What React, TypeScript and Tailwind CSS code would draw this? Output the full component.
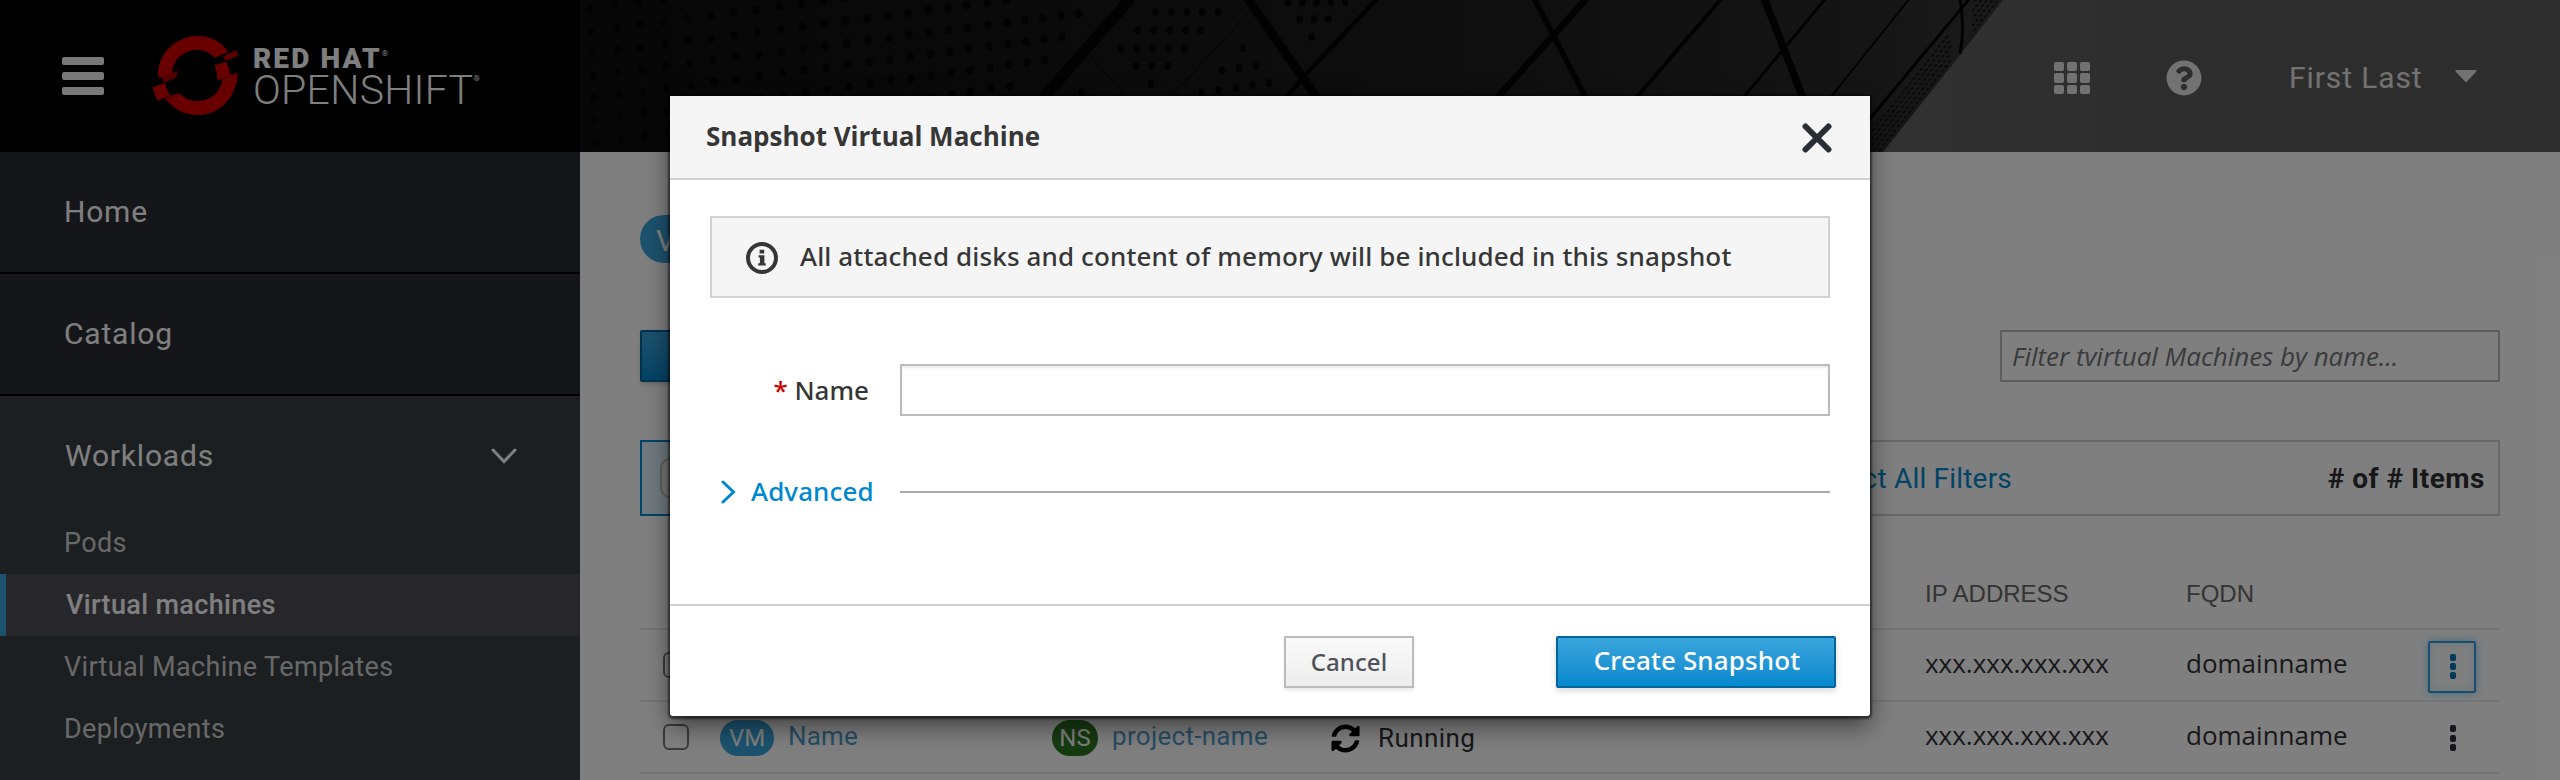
import type { ReactNode } from "react";
import { FaQuestionCircle, FaSyncAlt } from "react-icons/fa";

const overpass = "font-[Roboto,sans-serif]";

function Logo() {
  return (
    <svg width="96" height="104" viewBox="20 0 288 312" className="shrink-0">
      <g fill="#d20000">
        <path d="M53 160 C50 90 105 36 172 36 C210 36 244 52 263 84 L223 101 C208 85 192 77 172 77 C130 77 97 108 95 147 Z" />
        <path d="M222 124 L258 113 Q268 132 270 154 L230 166 Q231 143 222 124 Z" />
        <path d="M292 146 C292 215 240 273 172 273 C130 273 97 252 76 225 L120 210 C135 225 155 231 172 231 C212 231 244 202 247 162 Z" />
        <path d="M37 190 L74 176 Q78 198 90 213 L53 230 Q41 212 37 190 Z" />
      </g>
      <g fill="#b00000">
        <path d="M222 108 L288 78 L294 95 L256 112 L248 97 Z" />
        <path d="M53 160 L112 142 L108 160 L71 177 L66 163 Z" />
        <path d="M230 166 L270 151 L292 146 L288 154 L247 168 Z" />
        <path d="M72 221 L114 207 L122 212 L80 230 Z" />
      </g>
    </svg>
  );
}

const dotColumns = [
  60, 110, 156, 203, 250, 295, 340, 385, 430, 473, 516, 558, 600, 640, 680, 720, 758, 795, 835, 872, 907, 942, 978, 1013,
];
const dotRows = [-1, 0, 1, 2, 3, 4, 5, 6, 7, 8];
const extraDots: [number, number][] = [
  [1167, 37], [1198, 37], [1229, 37], [1259, 37], [1290, 37],
  [1133, 91], [1164, 91], [1195, 91], [1226, 91], [1256, 91],
  [1100, 146], [1131, 146], [1162, 146], [1193, 146], [1224, 146],
  [1129, 199], [1160, 199], [1191, 199], [1158, 252], [1022, 275],
  [1338, 145], [1297, 212], [1331, 205], [1364, 197],
  [1257, 278], [1291, 271], [1325, 264], [1357, 256], [1390, 249],
  [1427, 8], [1455, 8], [1483, 7], [1511, 7], [1539, 7],
  [1450, 58], [1478, 58], [1506, 58], [1473, 110],
];

const panelDots: [number, number][] = [];
for (let r = 0; r < 36; r++) {
  for (let c = 0; c < 5; c++) {
    const y = 2 + r * 4.6 - c * 0.4;
    const edge = y < 53 ? 2003 - y * 0.78 : 1961.7 - (y - 53) * 0.795;
    const x = edge - 5 - c * 5.6;
    const beam = 1968 - y * 0.83;
    if (y < 30 ? x > 1972 : x > beam + 6 && x < 1950 && y > 32) panelDots.push([x, y]);
  }
}

function Skyline() {
  return (
    <svg width="1980" height="152" viewBox="580 0 1980 152" className="block">
      <defs>
        <linearGradient id="wall" x1="0" x2="1">
          <stop offset="0" stopColor="#0e0e0e" />
          <stop offset="0.3" stopColor="#141414" />
          <stop offset="0.65" stopColor="#1e1e1e" />
          <stop offset="0.9" stopColor="#2a2a2a" />
          <stop offset="1" stopColor="#363636" />
        </linearGradient>
        <linearGradient id="sky" x1="0" x2="1">
          <stop offset="0" stopColor="#646464" />
          <stop offset="0.5" stopColor="#5a5a5a" />
          <stop offset="1" stopColor="#5c5c5c" />
        </linearGradient>
      </defs>
      <rect x="1860" y="0" width="700" height="152" fill="url(#sky)" />
      <path d="M580 0 H2003 L1961.7 53 L1883 152 H580 Z" fill="url(#wall)" />
      <g fill="#060606">
        {dotRows.flatMap((k) =>
          dotColumns.map((x) => {
            const y = 93 + 67 * k - 0.196 * (x - 60) - (k > 2 ? (k - 2) * (x / 1012) * 4 : 0);
            if (y < -5 || x + 0.6 * (y - 45) > 1030) return null;
            return <ellipse key={`${k}-${x}`} cx={560 + (x + k * 2) / 1.96} cy={y / 3} rx="3.7" ry="4.3" />;
          })
        )}
        {extraDots.map(([x, y]) => (
          <ellipse key={`${x}-${y}`} cx={560 + x / 1.96} cy={y / 3} rx="3.4" ry="4" />
        ))}
      </g>
      <g stroke="#050505" fill="none">
        <path d="M1131 -2 L1043 98" strokeWidth="11" />
        <path d="M1247 -2 L1317 98" strokeWidth="9" />
        <path d="M1378 -2 L1308 72 L1286 98" strokeWidth="4.5" />
        <path d="M1534 -2 L1586 98" strokeWidth="5.5" />
        <path d="M1587 -2 L1497 98" strokeWidth="6.5" />
        <path d="M1722 -2 L1636 98" strokeWidth="4" />
        <path d="M1764 -2 L1803 98" strokeWidth="7.5" />
        <path d="M1826 -2 L1743 98" strokeWidth="3" />
        <path d="M1910 -2 L1830 98" strokeWidth="2" />
        <path d="M1970 -2 L1868 121" strokeWidth="3" />
        <path d="M1960 -2 Q1965 30 1960 54" strokeWidth="3" />
        <path d="M1249 12 L1172 96 M1085 50 L1124 94" strokeWidth="1" />
      </g>
      <g fill="#161616">
        {panelDots.map(([x, y], i) => (
          <ellipse key={i} cx={x} cy={y} rx="2.1" ry="1.1" transform={`rotate(-35 ${x} ${y})`} />
        ))}
      </g>
    </svg>
  );
}

function Header() {
  return (
    <header className="flex h-[152px] bg-black">
      <div className="flex w-[580px] shrink-0 items-center pl-[62px]">
        <div className="flex w-[42px] flex-col gap-[7px]">
          <div className="h-2 rounded-[2px] bg-[#f2f2f2]" />
          <div className="h-2 rounded-[2px] bg-[#f2f2f2]" />
          <div className="h-2 rounded-[2px] bg-[#f2f2f2]" />
        </div>
        <div className="ml-[43px] flex items-center">
          <Logo />
          <div className={`${overpass} ml-[10px] flex flex-col text-white`}>
            <div className="flex h-[27px] text-[28px] font-black leading-[22px] tracking-[2.1px]">
              RED HAT<span className="text-[8px] font-normal leading-[12px] tracking-normal">®</span>
            </div>
            <div className="flex h-[29px] text-[41px] font-[350] leading-[30px] tracking-[0.3px]">
              OPENSHIFT<span className="text-[8px] font-normal leading-[8px] tracking-normal">®</span>
            </div>
          </div>
        </div>
      </div>
      <div className="grid grow">
        <div className="col-start-1 row-start-1">
          <Skyline />
        </div>
        <div className="z-10 col-start-1 row-start-1 flex h-[152px] items-center pl-[1474px] pt-1 text-[#e4e4e4]">
          <div className="grid grid-cols-3 gap-x-[3px] gap-y-[2px]">
            {Array.from({ length: 9 }, (_, i) => (
              <div key={i} className="h-[9.3px] w-[10px] rounded-[2px] bg-[#e4e4e4]" />
            ))}
          </div>
          <FaQuestionCircle size={36} className="ml-[76px]" />
          <div className={`${overpass} ml-[87px] w-[134px] whitespace-nowrap pb-[2px] text-[30px] tracking-[0.9px]`}>
            First Last
          </div>
          <svg width="22" height="12" viewBox="0 0 22 12" className="mb-1 ml-[32px]">
            <path d="M1.5 1 H20.5 L11 11 Z" fill="#e4e4e4" stroke="#e4e4e4" strokeWidth="2" strokeLinejoin="round" />
          </svg>
        </div>
      </div>
    </header>
  );
}

const workloads = ["Pods", "Virtual machines", "Virtual Machine Templates", "Deployments"];

function Sidebar() {
  return (
    <nav className={`${overpass} w-[580px] shrink-0 bg-[#393f43]`}>
      {["Home", "Catalog"].map((t) => (
        <div
          key={t}
          className="flex h-[122px] items-center border-b-2 border-black bg-[#2a2c33] pb-[2px] pl-[64px] text-[30px] tracking-[0.8px] text-white"
        >
          {t}
        </div>
      ))}
      <div className="flex h-[116px] items-center justify-between pl-[65px] pr-[63px] pt-[2px] text-[30px] tracking-[0.8px] text-white">
        Workloads
        <svg width="26" height="16" viewBox="0 0 26 16" fill="none" stroke="#fff" strokeWidth="3" strokeLinecap="round" className="mt-[2px]">
          <path d="M2 2 L13 13.5 L24 2" />
        </svg>
      </div>
      {workloads.map((t) =>
        t === "Virtual machines" ? (
          <div
            key={t}
            className="flex h-[62px] items-center border-l-[6px] border-[#39a5dc] bg-[#4e4f57] pl-[60px] text-[27px] font-medium tracking-[0.35px] text-white"
          >
            {t}
          </div>
        ) : (
          <div key={t} className="flex h-[62px] items-center pl-[64px] pt-[1px] text-[27px] tracking-[0.35px] text-[#d1d1d1]">
            {t}
          </div>
        )
      )}
    </nav>
  );
}

function Checkbox() {
  return <div className="h-[26px] w-[26px] rounded-[6px] border-2 border-[#77777b]" />;
}

function Badge({ children, className }: { children: ReactNode; className: string }) {
  return (
    <div className={`flex h-9 items-center justify-center rounded-full text-[24px] text-white ${className}`}>{children}</div>
  );
}

function Kebab({ active }: { active?: boolean }) {
  const dot = active ? "h-[7px] w-[6px] rounded-[2px] bg-[#0075b5]" : "h-[7px] w-[6px] rounded-[2px] bg-[#2d2d38]";
  return (
    <div
      className={
        active
          ? "mt-[3px] flex h-[52px] w-12 items-center justify-center rounded-[2px] border-2 border-[#2e9bd6] shadow-[0_0_10px_rgba(90,190,240,0.7),inset_0_0_10px_rgba(130,200,240,0.35)]"
          : "mt-[2px] flex h-[52px] w-12 items-center justify-center"
      }
    >
      <div className="ml-[2px] flex flex-col gap-[2.2px]">
        <div className={dot} />
        <div className={dot} />
        <div className={dot} />
      </div>
    </div>
  );
}

const columns = "grid grid-cols-[57px_332px_279px_594px_262px_241px_1fr] items-center pl-[23px]";

function Row({ active }: { active?: boolean }) {
  return (
    <div className={`${columns} h-[72px] border-b-2 border-[#ebebeb] font-['Open_Sans',sans-serif] text-[26px] text-[#303036]`}>
      <Checkbox />
      <div className={`${overpass} flex items-center gap-[14px] pt-[2px] text-[#4f9bcb]`}>
        <Badge className="w-[54px] bg-[#39a5dc]">VM</Badge>
        <span className="pb-[4px] tracking-[0.2px]">Name</span>
      </div>
      <div className={`${overpass} flex items-center gap-[14px] pt-[2px] text-[#4f9bcb]`}>
        <Badge className="w-[46px] bg-[#2d7623]">NS</Badge>
        <span className="pb-[4px] tracking-[0.3px]">project-name</span>
      </div>
      <div className={`${overpass} flex items-center gap-[18px] pt-[2px]`}>
        <FaSyncAlt size={29} color="#000" />
        <span className="tracking-[0.4px]">Running</span>
      </div>
      <div className="pb-[4px]">xxx.xxx.xxx.xxx</div>
      <div className="-ml-[1px] pb-[4px]">domainname</div>
      <Kebab active={active} />
    </div>
  );
}

function Main() {
  return (
    <main className="grow bg-white px-[60px] pt-[63px]">
      <div className={`${overpass} flex h-12 w-[96px] items-center rounded-full bg-[#39a5dc] pl-4 pt-[2px] text-[30px] text-white`}>
        VM
      </div>
      <div className="mt-[67px] flex justify-between">
        <div className="h-[52px] w-[260px] rounded-[2px] border-2 border-[#00659c] bg-linear-to-b from-[#39a5dc] to-[#0088ce] shadow-[0_3px_4px_rgba(0,0,0,0.15)]" />
        <div className="flex h-[52px] w-[500px] items-center border-2 border-[#bbbbbb] pl-[10px] font-['Open_Sans',sans-serif] text-[26px] italic tracking-[-0.03px] text-[#72767b]">
          Filter tvirtual Machines by name...
        </div>
      </div>
      <div className={`${overpass} mt-[58px] flex h-[76px] items-center border-2 border-[#d1d1d1] text-[28px]`}>
        <div className="-ml-[2px] flex h-[76px] w-[200px] shrink-0 items-center border-2 border-[#0088ce] bg-[#def3ff] pl-[18px]">
          <div className="h-10 w-[70px] rounded-[10px] border-2 border-[#bbbbbb] bg-[#ededed]" />
        </div>
        <div className="ml-auto w-[260px] whitespace-nowrap pt-[2px] text-right tracking-[0.2px] text-[#0088ce]">
          Select All Filters
        </div>
        <div className="ml-[315px] mr-[13px] w-[158px] whitespace-nowrap pt-[2px] text-right font-bold tracking-[0.5px] text-[#303036]">
          # of # Items
        </div>
      </div>
      <div
        className={`${columns} h-[114px] border-b-2 border-[#ebebeb] pt-[43px] font-['Liberation_Sans',sans-serif] text-[24px] text-[#686868]`}
      >
        <div className="col-start-5 whitespace-nowrap">IP ADDRESS</div>
        <div className="-ml-[1px]">FQDN</div>
      </div>
      <Row active />
      <Row />
    </main>
  );
}

function Modal() {
  return (
    <section className="absolute left-[670px] top-[96px] flex h-[620px] w-[1200px] flex-col rounded-b-[3px] bg-white font-['Noto_Sans',sans-serif] text-[26px] text-[#363636] shadow-[0_1px_2px_2px_rgba(0,0,0,0.5),0_10px_24px_rgba(0,0,0,0.5)]">
      <div className="flex h-[84px] items-center justify-between border-b-2 border-[#d1d1d1] bg-[#f5f5f5] pl-[36px] pr-[37px]">
        <h1 className="pb-[1px] font-['Open_Sans',sans-serif] font-bold">Snapshot Virtual Machine</h1>
        <svg width="32" height="30" viewBox="0 0 32 30" fill="none" stroke="#292e34" strokeWidth="6" strokeLinecap="round" className="mt-[1px]">
          <path d="M4.5 3.5 L27.5 26.5 M27.5 3.5 L4.5 26.5" />
        </svg>
      </div>
      <div className="flex grow flex-col px-10 pt-9">
        <div className="flex h-[82px] items-center border-2 border-[#d1d1d1] bg-[#f5f5f5] pl-[34px] font-medium">
          <svg width="32" height="32" viewBox="0 0 32 32" className="mt-[2px]">
            <circle cx="16" cy="16" r="14" fill="none" stroke="#363636" strokeWidth="4" />
            <path d="M13.6 7.8 H18.2 V11.4 H13.6 Z M12.6 13.2 H18.4 V21.2 H19.8 V23.4 H12.2 V21.2 H13.9 V15.4 H12.6 Z" fill="#363636" />
          </svg>
          <span className="ml-[22px] whitespace-nowrap pb-[2px] tracking-[0.13px]">
            All attached disks and content of memory will be included in this snapshot
          </span>
        </div>
        <div className="mt-[66px] flex items-center">
          <div className="w-[190px] pr-[31px] text-right font-medium">
            <span className="text-[#c00]">*</span> Name
          </div>
          <div className="h-[52px] grow border-2 border-[#bbbbbb] bg-white shadow-[inset_0_2px_2px_rgba(0,0,0,0.08)]" />
        </div>
        <div className="mt-[58px] flex h-[36px] items-center">
          <svg width="15" height="24" viewBox="0 0 15 24" fill="none" stroke="#0088ce" strokeWidth="3" strokeLinecap="round" className="ml-[11px]">
            <path d="M2 2 L12.5 12 L2 22" />
          </svg>
          <span className="ml-[15px] w-[149px] pb-[1px] font-medium tracking-[0.1px] text-[#0088ce]">Advanced</span>
          <div className="h-[2px] grow bg-[#aaaaaa]" />
        </div>
      </div>
      <div className="flex h-[112px] items-start justify-end border-t-2 border-[#d1d1d1] pr-[34px] pt-[30px] font-medium">
        <button className="flex h-[52px] w-[130px] items-center justify-center border-2 border-[#bbbbbb] bg-linear-to-b from-[#fafafa] to-[#ededed] text-[24px] tracking-[0.1px] text-[#4d5258] shadow-[0_3px_3px_rgba(0,0,0,0.07)]">
          Cancel
        </button>
        <button className="ml-[142px] flex h-[52px] w-[280px] items-center justify-center rounded-[2px] border-2 border-[#00659c] bg-linear-to-b from-[#39a5dc] to-[#0088ce] pb-[4px] pl-[2px] tracking-[0.12px] text-white shadow-[0_3px_6px_rgba(0,0,0,0.15)]">
          Create Snapshot
        </button>
      </div>
    </section>
  );
}

export default function App() {
  return (
    <div className="relative flex h-[780px] w-[2560px] flex-col overflow-hidden">
      <Header />
      <div className="flex h-[628px] overflow-hidden">
        <Sidebar />
        <Main />
      </div>
      <div className="absolute inset-0 z-20 bg-black/50">
        <Modal />
      </div>
    </div>
  );
}
